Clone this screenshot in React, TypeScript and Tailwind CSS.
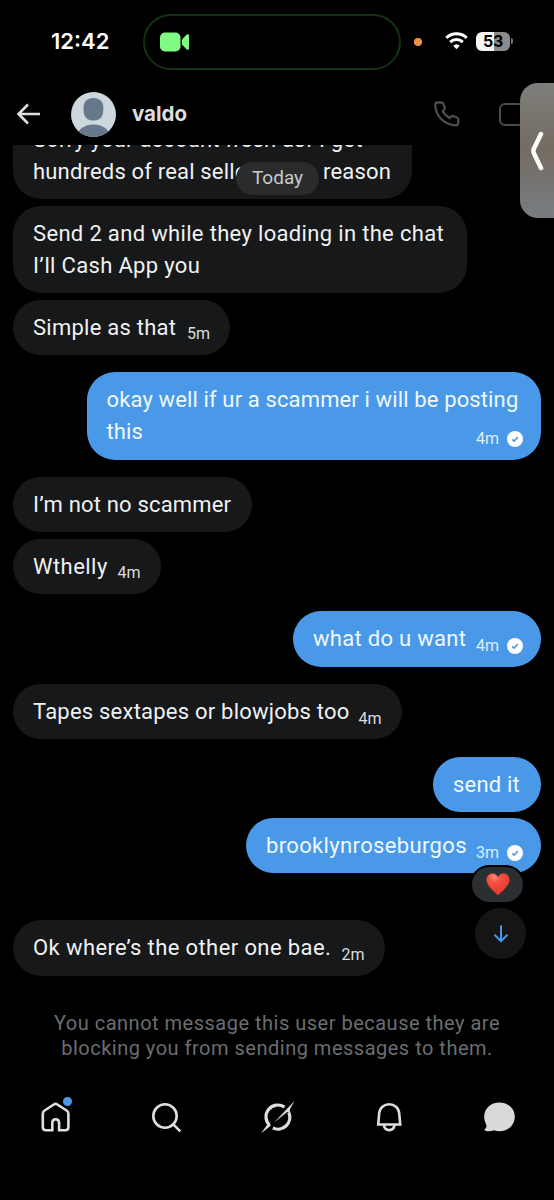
type Message = {
  id: number;
  lines: string[];
  mine?: boolean;
  time?: string;
  reaction?: boolean;
  box: string;
};

const messages: Message[] = [
  { id: 1, lines: ["Sorry your account fresh asf I get", "hundreds of real sellers for a reason"], box: "w-[398.5px] h-[87px] tracking-[0.18px]" },
  { id: 2, lines: ["Send 2 and while they loading in the chat", "I’ll Cash App you"], box: "mt-[6.5px] w-[454px] h-[87.5px] tracking-[0.33px]" },
  { id: 3, lines: ["Simple as that"], time: "5m", box: "mt-[6.5px] w-[217px] h-[55.25px] tracking-[0.25px]" },
  { id: 4, lines: ["okay well if ur a scammer i will be posting", "this"], mine: true, time: "4m", box: "mt-[17.25px] w-[454.5px] h-[87.5px] tracking-[0.13px]" },
  { id: 5, lines: ["I’m not no scammer"], box: "mt-[17.5px] w-[239px] h-[55.25px] tracking-[0.18px]" },
  { id: 6, lines: ["Wthelly"], time: "4m", box: "mt-[6.25px] w-[147.5px] h-[55.25px] tracking-[0.45px]" },
  { id: 7, lines: ["what do u want"], mine: true, time: "4m", box: "mt-[17.5px] w-[248px] h-[55.25px] tracking-[0.3px]" },
  { id: 8, lines: ["Tapes sextapes or blowjobs too"], time: "4m", box: "mt-[17.5px] w-[388.5px] h-[55.25px] tracking-[0.22px]" },
  { id: 9, lines: ["send it"], mine: true, box: "mt-[17.25px] w-[108px] h-[55.25px] tracking-[0.2px]" },
  { id: 10, lines: ["brooklynroseburgos"], mine: true, time: "3m", reaction: true, box: "mt-[6.25px] w-[295px] h-[55.25px] tracking-[0.35px]" },
  { id: 11, lines: ["Ok where’s the other one bae."], time: "2m", box: "mt-[47px] w-[371.5px] h-[55.25px] tracking-[0.4px]" },
];

function SeenBadge() {
  return (
    <svg className="w-4 h-4" viewBox="0 0 16 16" fill="none">
      <circle cx="8" cy="8" r="8" fill="#fff" />
      <path d="M5.2 8.4l1.900 1.800 3.700-4.100" stroke="#4a99e9" strokeWidth="1.600" />
    </svg>
  );
}

function Heart() {
  return (
    <svg className="w-6 h-[23px]" viewBox="0 0 24 23">
      <defs>
        <radialGradient id="heart" cx="0.35" cy="0.15" r="0.9">
          <stop offset="0" stopColor="#ff8a78" />
          <stop offset="0.3" stopColor="#f4503f" />
          <stop offset="1" stopColor="#e0352b" />
        </radialGradient>
      </defs>
      <path d="M12 22.5C9.5 19.5 0.5 13.5 0.5 6.8 0.5 3 3.3 0.5 6.400 0.5c2.600 0 4.700 1.400 5.600 3.900C12.900 1.900 15 0.5 17.600 0.5c3.100 0 5.900 2.500 5.900 6.300 0 6.700-9 12.700-11.500 15.700z" fill="url(#heart)" />
    </svg>
  );
}

function Bubble({ message }: { message: Message }) {
  const { lines, mine, time, reaction, box } = message;
  return (
    <div
      className={`relative shrink-0 rounded-[28px] px-5 pt-3 flex whitespace-nowrap ${
        mine ? "self-end bg-[#4a99e9] text-[#f0f8ff]" : "self-start bg-[#16181a] text-[#f0f1f2]"
      } ${box}`}
    >
      <div className="flex-1 w-0 text-[22px] leading-8">
        {lines.map((line) => (
          <p key={line}>{line}</p>
        ))}
      </div>
      {time && (
        <div className={`self-end flex items-center gap-2 text-base leading-5 tracking-normal pb-[10.5px] ${mine ? "-mr-[2px] text-[#dcefff]" : "text-[#dcdddf]"}`}>
          {time}
          {mine && <SeenBadge />}
        </div>
      )}
      {reaction && (
        <div className="absolute right-[18px] top-[48.5px] w-[51px] h-[35px] rounded-full bg-[#2b2f31] ring-2 ring-black flex items-center justify-center">
          <Heart />
        </div>
      )}
    </div>
  );
}

function StatusBar() {
  return (
    <div className="h-[83px] shrink-0 flex items-start text-white">
      <span className="ml-[51px] mt-[27px] w-[92px] font-['Inter'] text-[22px] leading-7 font-semibold">12:42</span>
      <div className="mt-[14px] w-[258px] h-14 rounded-full border-2 border-[#143313] flex items-center">
        <svg className="ml-[15px] w-[30px] h-5" viewBox="0 0 30 20" fill="#80fa83">
          <rect x="0" y="0.5" width="20.500" height="19" rx="5" />
          <path d="M22 7.600l4.200-4.700c1-1.100 2.800-.8 2.800.7v12.800c0 1.500-1.800 1.800-2.800.7l-4.200-4.700z" />
        </svg>
      </div>
      <span className="ml-[12.5px] mt-[38px] w-2 h-2 rounded-full bg-[#f7913d]" />
      <svg className="ml-[23.5px] mt-8 w-[23px] h-[18px]" viewBox="0 0 23 18" fill="none" stroke="#fff" strokeWidth="3">
        <path d="M1.300 5.900a14.800 14.800 0 0 1 20.400 0" />
        <path d="M5.200 10.100a9.200 9.200 0 0 1 12.600 0" />
        <path d="M11.500 17.200L8.200 13.700a4.800 4.800 0 0 1 6.600 0z" fill="#fff" stroke="none" />
      </svg>
      <div className="ml-2 mt-8 w-[34px] h-[18.5px] rounded-[6px] bg-linear-to-r from-[#f5f5f5] from-54% to-[#8b8b8b] to-54% flex items-center justify-center font-['Inter'] text-[16px] tracking-tight font-bold text-black">
        53
      </div>
      <span className="ml-px mt-[38px] w-[2px] h-[6px] rounded-r-full bg-[#777]" />
    </div>
  );
}

function Header() {
  return (
    <div className="h-[62px] shrink-0 flex items-center pl-4">
      <svg className="w-6 h-[22px]" viewBox="0 0 24 22" fill="none" stroke="#dedede" strokeWidth="2.600">
        <path d="M24 11H2.500M12 1.500L2.500 11l9.500 9.500" />
      </svg>
      <svg className="ml-[31px] w-[45px] h-[45px]" viewBox="0 0 45 45">
        <clipPath id="avatar">
          <circle cx="22.500" cy="22.500" r="22.500" />
        </clipPath>
        <g clipPath="url(#avatar)">
          <rect width="45" height="45" fill="#cdd7de" />
          <path d="M22.500 6c6.200 0 9.800 3.600 9.800 9.500 0 7.500-1 13-9.800 13s-10-5.500-10-13C12.500 9.600 16.300 6 22.500 6z" fill="#67788a" />
          <ellipse cx="22.500" cy="44" rx="16" ry="11.500" fill="#67788a" />
        </g>
      </svg>
      <h1 className="ml-4 w-[302px] font-['Inter'] text-[20.5px] font-bold text-[#dedede]">valdo</h1>
      <svg className="w-[26px] h-[26px] shrink-0" viewBox="0 0 26 26" fill="none" stroke="#4c4c4c" strokeWidth="2.300" strokeLinejoin="round">
        <path d="M3.200 1.500h4.300c1 0 1.600.5 1.900 1.300l1.400 3.700c.3.800.1 1.400-.5 2L8.700 10.100c1.400 3 4 5.500 7 7l1.600-1.600c.6-.6 1.200-.7 2-.4l3.700 1.400c.9.400 1.300 1 1.300 1.900v3.200c0 1.800-1 2.800-2.700 2.700C10.300 23.700 2 15.500 1.300 4.500 1.200 2.700 1.700 1.500 3.200 1.500z" />
      </svg>
      <span className="ml-[39px] w-[25px] h-[23px] shrink-0 rounded-[6px] border-2 border-[#4c4c4c]" />
    </div>
  );
}

function TabBar() {
  return (
    <nav className="mt-[32px] h-[48px] shrink-0 flex items-center justify-between px-[37px]">
      <div className="relative">
        <svg className="w-9 h-9" viewBox="0 0 36 36" fill="none" stroke="#dedede" strokeWidth="2.600">
          <path d="M15.300 31.300H9c-1.900 0-3.200-1.200-3.200-3.200V14.700c0-1.500.6-2.400 1.800-3.200l9.200-6c1.100-.7 2.500-.7 3.600 0l9.200 6c1.200.8 1.800 1.700 1.800 3.200v13.400c0 2-1.300 3.200-3.200 3.200h-6.100V24c0-2.400-1.100-3.800-3.400-3.800S15.300 21.600 15.300 24z" />
        </svg>
        <span className="absolute left-[25.5px] -top-[2px] w-[9px] h-[9px] rounded-full bg-[#4a99e9]" />
      </div>
      <svg className="w-9 h-9" viewBox="0 0 36 36" fill="none" stroke="#dedede" strokeWidth="2.600">
        <circle cx="17" cy="17" r="11.700" />
        <path d="M25.300 25.300l7 7" />
      </svg>
      <svg className="w-9 h-9" viewBox="0 0 36 36">
        <path d="M25.500 8.100A11.800 11.800 0 0 0 10.500 26.200" fill="none" stroke="#dedede" strokeWidth="3.200" />
        <path d="M29.800 13.500A11.800 11.800 0 0 1 13.900 28.900" fill="none" stroke="#dedede" strokeWidth="3.200" />
        <path d="M35.500 2L31.500 9c-.8 1.600-.8 3-.3 5l-3-1L15 23.500z" fill="#dedede" />
        <path d="M2 34.500L9 24.500l3 2z" fill="#dedede" />
      </svg>
      <svg className="w-9 h-9" viewBox="0 0 36 36" fill="none" stroke="#dedede" strokeWidth="2.600">
        <path d="M8.200 25.500l1-11.400C9.700 8.600 14 5.300 19.200 5.300s9.500 3.300 10 8.800l1 11.400z" />
        <path d="M13.800 25.800c.5 3.300 2.600 5.300 5.400 5.300s4.900-2 5.400-5.300" />
      </svg>
      <svg className="w-9 h-9" viewBox="0 0 36 36" fill="#d9d9d9">
        <path d="M18.500 3.500c8.600 0 15.300 6 15.300 14.300s-6.700 14.500-15.300 14.500c-2 0-3.800-.4-5.300-1-2.200.9-5.700 1.300-8.700.4-1.300-.4-1.300-1.400-.3-2 1.600-1.200 1.500-3.200.7-5C3.800 22.700 3.200 20.500 3.200 17.800 3.200 9.500 9.900 3.500 18.500 3.500z" />
      </svg>
    </nav>
  );
}

export default function App() {
  return (
    <div className="relative w-[554px] h-[1200px] overflow-hidden bg-black flex flex-col font-['Roboto',sans-serif]">
      <StatusBar />
      <Header />

      {/* Conversation */}
      <main className="relative h-[855px] shrink-0 overflow-hidden px-[13px]">
        <div className="-mt-[33px] flex flex-col">
          {messages.map((message) => (
            <Bubble key={message.id} message={message} />
          ))}
        </div>
        <div className="absolute left-[236px] top-[17px] w-[83px] h-[33px] rounded-full bg-[#2a2b2d] text-[#c9cacb] text-[19px] flex items-center justify-center">
          Today
        </div>
        <button className="absolute left-[475px] top-[763px] w-[51px] h-[51px] rounded-full bg-[#151515] flex items-center justify-center">
          <svg className="w-4 h-[18px]" viewBox="0 0 16 18" fill="none" stroke="#4a99e9" strokeWidth="2">
            <path d="M8 0.500V16M1.500 9.800L8 16.200l6.500-6.400" />
          </svg>
        </button>
      </main>

      {/* Blocked notice */}
      <p className="mt-[11px] shrink-0 text-center text-[20px] leading-[25px] tracking-[0.5px] text-[#6a6d71] whitespace-nowrap">
        You cannot message this user because they are
        <br />
        blocking you from sending messages to them.
      </p>

      <TabBar />

      {/* Side drawer handle */}
      <div className="absolute left-[520px] top-[83px] w-[34px] h-[135px] rounded-l-[18px] bg-linear-to-b from-[#7e7e7b] via-[#746c62] to-[#777d82] flex items-center justify-center">
        <svg className="w-[14px] h-10" viewBox="0 0 14 40" fill="none" stroke="#fffdf8" strokeWidth="4.500" strokeLinecap="round" strokeLinejoin="round">
          <path d="M11 3L3.500 18.500v3L11 37" />
        </svg>
      </div>
    </div>
  );
}
